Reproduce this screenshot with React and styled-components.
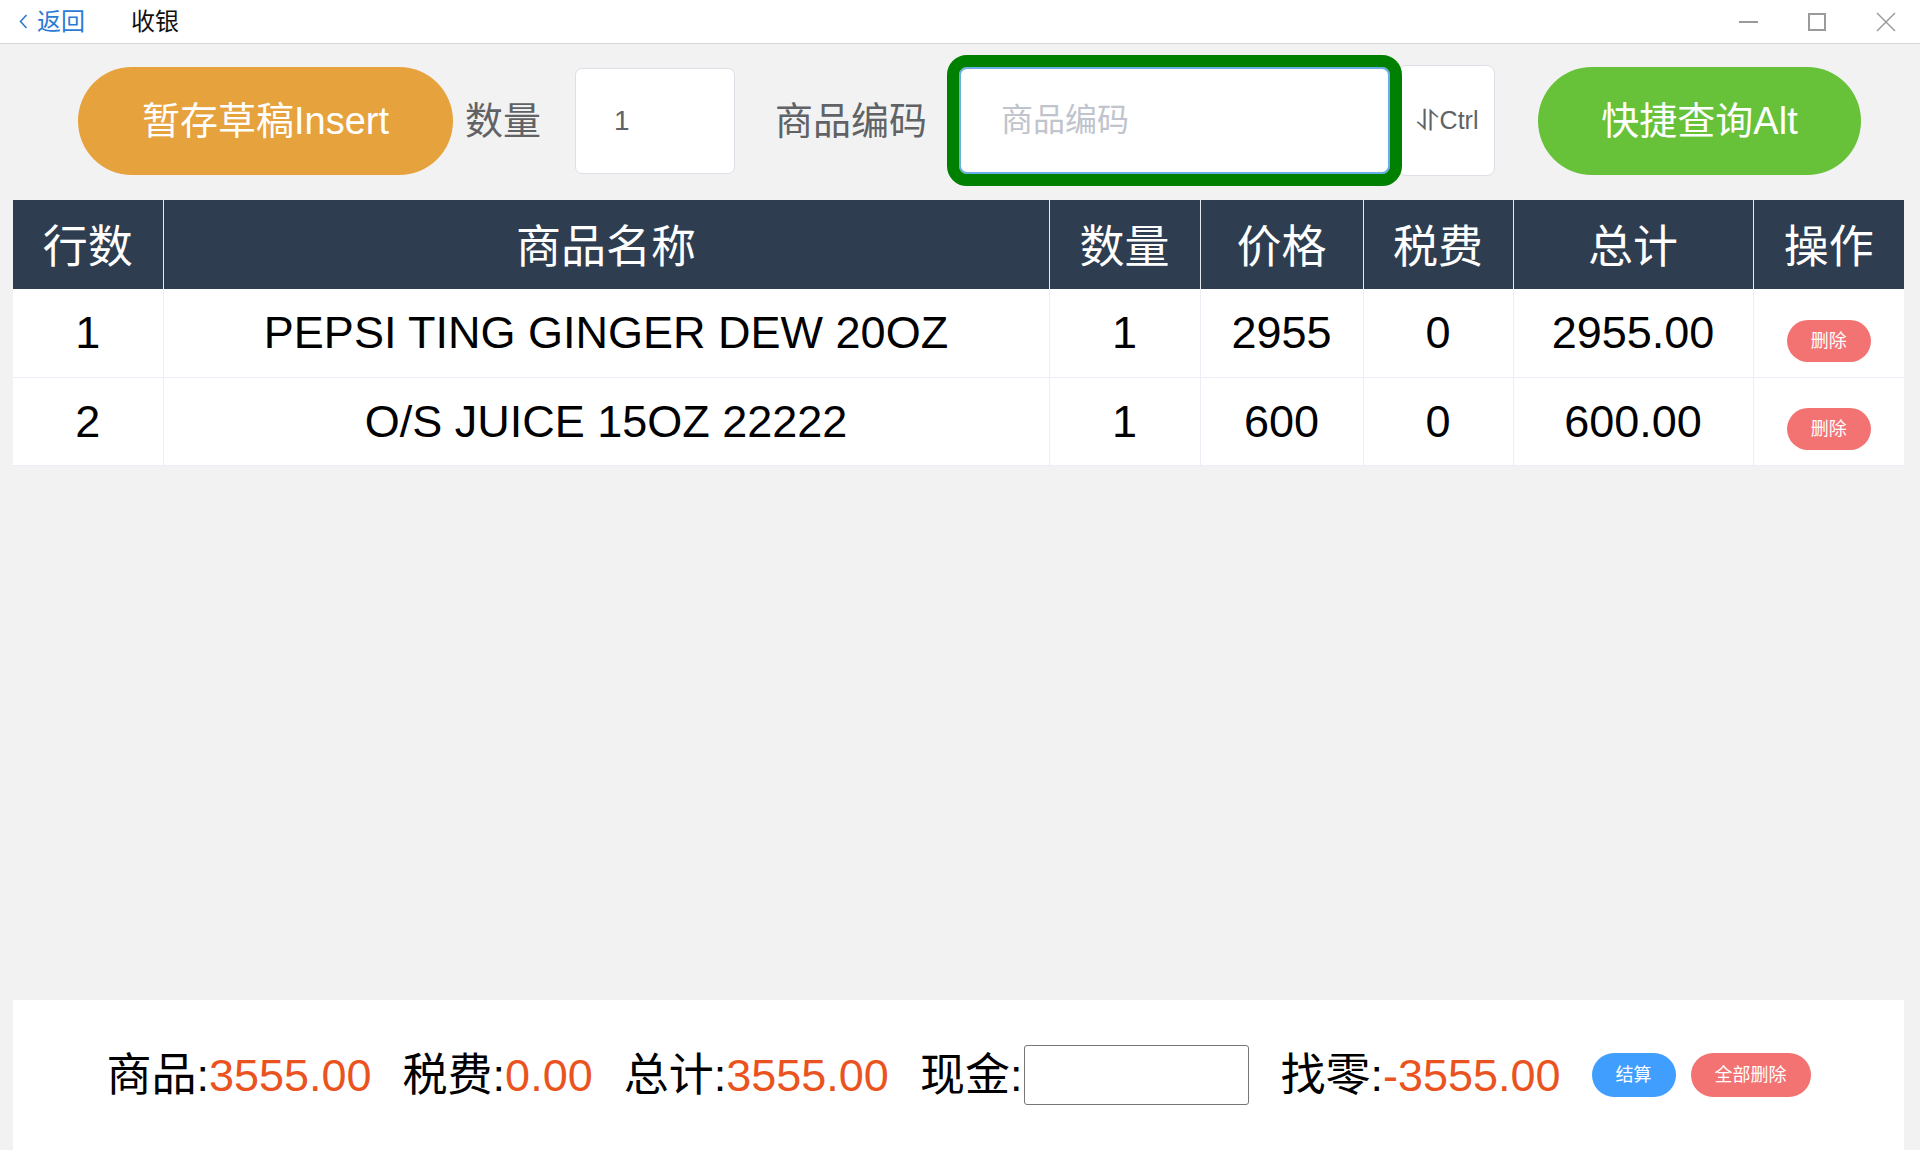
import React from "react";
import styled, { createGlobalStyle } from "styled-components";

const GlobalStyle = createGlobalStyle`
  html, body {
    margin: 0;
    padding: 0;
  }
  body {
    background: #f2f2f2;
    font-family: "Liberation Sans", "Noto Sans CJK SC", sans-serif;
  }
  * {
    box-sizing: border-box;
  }
`;

const Page = styled.div`
  height: 1150px;
  display: flex;
  flex-direction: column;
  overflow: hidden;
`;

// title bar
const TitleBar = styled.div`
  height: 44px;
  flex-shrink: 0;
  display: flex;
  align-items: center;
  padding: 0 24px 0 19px;
  background: #fff;
  border-bottom: 1px solid #d6d6d6;
`;
const BackLink = styled.a`
  display: flex;
  align-items: center;
  gap: 9px;
  color: #2b7bd6;
  font-size: 24px;
  line-height: 1;
  cursor: pointer;
`;
const Title = styled.span`
  margin-left: 46px;
  font-size: 24px;
  line-height: 1;
  color: #111;
`;
const WindowControls = styled.div`
  margin-left: auto;
  display: flex;
  align-items: center;
  gap: 50px;
  color: #9a9a9a;
`;

// toolbar
const Toolbar = styled.div`
  display: flex;
  align-items: center;
  padding: 21px 0 0 78px;
  flex-shrink: 0;
`;
const PillButton = styled.button`
  width: ${(props) => props.$width}px;
  height: 108px;
  margin-left: ${(props) => props.$space || 0}px;
  border: none;
  border-radius: 54px;
  background: ${(props) => props.$color};
  color: #fff;
  font-family: inherit;
  font-size: 38px;
  line-height: 1;
  white-space: nowrap;
  cursor: pointer;
`;
const Label = styled.span`
  margin-left: ${(props) => props.$space}px;
  font-size: 38px;
  line-height: 1;
  color: #606266;
  white-space: nowrap;
`;
const QtyInput = styled.input`
  width: 160px;
  height: 106px;
  margin-left: 34px;
  padding: 0 0 0 38px;
  border: 1px solid #dcdfe6;
  border-radius: 7px;
  background: #fff;
  font-family: inherit;
  font-size: 28px;
  color: #606266;
  outline: none;
`;
const CodeInput = styled.input`
  position: relative;
  z-index: 1;
  width: 431px;
  height: 107px;
  margin-left: 32px;
  padding: 0 0 0 40px;
  border: 2px solid #6aaee6;
  border-radius: 8px;
  background: #fff;
  font-family: inherit;
  font-size: 32px;
  color: #606266;
  caret-color: #606266;
  outline: 12px solid #008000;
  &:focus {
    outline: 12px solid #008000;
  }
  &::placeholder {
    color: #c0c4cc;
  }
`;
const KeyHint = styled.div`
  width: 97px;
  height: 111px;
  margin-left: 8px;
  display: flex;
  align-items: center;
  justify-content: center;
  padding-left: 2px;
  border: 1px solid #dcdfe6;
  border-radius: 8px;
  background: #fff;
  color: #606266;
  font-size: 25px;
  line-height: 1;
  span {
    font-family: "DejaVu Sans", sans-serif;
    font-size: 29px;
    margin-right: 1px;
  }
`;

// table
const TableWrap = styled.div`
  margin: 24px 16px 0 13px;
  flex-shrink: 0;
`;
const Table = styled.table`
  width: 100%;
  border-collapse: collapse;
  table-layout: fixed;
  background: #fff;
`;
const HeadCell = styled.th`
  height: 89px;
  padding: 6px 0 0;
  background: #2e3d50;
  color: #fff;
  font-size: 45px;
  font-weight: normal;
  line-height: 1;
  text-align: center;
  border-right: 1px solid #e6e9ee;
  &:last-child {
    border-right: none;
  }
`;
const Cell = styled.td`
  height: 88px;
  padding: 0;
  font-size: 45px;
  line-height: 1;
  text-align: center;
  color: #000;
  border-right: 1px solid #ebeef5;
  border-bottom: 1px solid #ebeef5;
  white-space: nowrap;
  &:last-child {
    border-right: none;
  }
`;
const SmallButton = styled.button`
  height: ${(props) => (props.$small ? 42 : 44)}px;
  padding: 0 24px;
  margin-top: ${(props) => (props.$small ? 16 : 0)}px;
  border: none;
  border-radius: 22px;
  background: ${(props) => (props.$tone === "blue" ? "#409eff" : "#f37372")};
  color: #fff;
  font-family: inherit;
  font-size: 18px;
  line-height: 1;
  white-space: nowrap;
  cursor: pointer;
`;

// footer
const Filler = styled.div`
  flex: 1;
`;
const Footer = styled.div`
  height: 150px;
  flex-shrink: 0;
  margin: 0 16px 0 13px;
  display: flex;
  align-items: center;
  justify-content: center;
  gap: 31px;
  background: #fff;
`;
const Stat = styled.div`
  display: flex;
  align-items: center;
  font-size: 45px;
  line-height: 1;
  color: #000;
  white-space: nowrap;
`;
const Value = styled.span`
  color: #ea5320;
`;
const CashInput = styled.input`
  width: 225px;
  height: 60px;
  margin-left: 2px;
  border: 1px solid #767676;
  border-radius: 3px;
  background: #fff;
  font-size: 28px;
`;
const ButtonGroup = styled.div`
  display: flex;
  gap: 15px;
`;

const rows = [
  { id: 1, name: "PEPSI TING GINGER DEW 20OZ", qty: 1, price: 2955, tax: 0, total: "2955.00" },
  { id: 2, name: "O/S JUICE 15OZ 22222", qty: 1, price: 600, tax: 0, total: "600.00" },
];

const columns = [
  { title: "行数", width: 150 },
  { title: "商品名称", width: 886 },
  { title: "数量", width: 151 },
  { title: "价格", width: 163 },
  { title: "税费", width: 150 },
  { title: "总计", width: 240 },
  { title: "操作", width: 151 },
];

function App() {
  return (
    <Page>
      <GlobalStyle />
      <TitleBar>
        <BackLink>
          <svg width="9" height="15" viewBox="0 0 9 15">
            <polyline points="7.5,1 1.5,7.5 7.5,14" fill="none" stroke="currentColor" strokeWidth="1.6" />
          </svg>
          返回
        </BackLink>
        <Title>收银</Title>
        <WindowControls>
          <svg width="19" height="20" viewBox="0 0 19 20">
            <line x1="0" y1="10" x2="19" y2="10" stroke="currentColor" strokeWidth="2" />
          </svg>
          <svg width="18" height="20" viewBox="0 0 18 20">
            <rect x="1" y="2" width="16" height="16" fill="none" stroke="currentColor" strokeWidth="2" />
          </svg>
          <svg width="20" height="20" viewBox="0 0 20 20">
            <line x1="1" y1="1" x2="19" y2="19" stroke="currentColor" strokeWidth="1.5" />
            <line x1="19" y1="1" x2="1" y2="19" stroke="currentColor" strokeWidth="1.5" />
          </svg>
        </WindowControls>
      </TitleBar>

      <Toolbar>
        <PillButton $width={375} $color="#e6a23c">暂存草稿Insert</PillButton>
        <Label $space={12}>数量</Label>
        <QtyInput defaultValue="1" />
        <Label $space={40}>商品编码</Label>
        <CodeInput placeholder="商品编码" autoFocus />
        <KeyHint>
          <span>⥯</span>Ctrl
        </KeyHint>
        <PillButton $width={323} $space={43} $color="#67c23a">快捷查询Alt</PillButton>
      </Toolbar>

      <TableWrap>
        <Table>
          <colgroup>
            {columns.map((c) => (
              <col key={c.title} style={{ width: c.width }} />
            ))}
          </colgroup>
          <thead>
            <tr>
              {columns.map((c) => (
                <HeadCell key={c.title}>{c.title}</HeadCell>
              ))}
            </tr>
          </thead>
          <tbody>
            {rows.map((r) => (
              <tr key={r.id}>
                <Cell>{r.id}</Cell>
                <Cell>{r.name}</Cell>
                <Cell>{r.qty}</Cell>
                <Cell>{r.price}</Cell>
                <Cell>{r.tax}</Cell>
                <Cell>{r.total}</Cell>
                <Cell>
                  <SmallButton $small>删除</SmallButton>
                </Cell>
              </tr>
            ))}
          </tbody>
        </Table>
      </TableWrap>

      <Filler />

      <Footer>
        <Stat>
          商品:<Value>3555.00</Value>
        </Stat>
        <Stat>
          税费:<Value>0.00</Value>
        </Stat>
        <Stat>
          总计:<Value>3555.00</Value>
        </Stat>
        <Stat>
          现金:<CashInput />
        </Stat>
        <Stat>
          找零:<Value>-3555.00</Value>
        </Stat>
        <ButtonGroup>
          <SmallButton $tone="blue">结算</SmallButton>
          <SmallButton>全部删除</SmallButton>
        </ButtonGroup>
      </Footer>
    </Page>
  );
}

export default App;
